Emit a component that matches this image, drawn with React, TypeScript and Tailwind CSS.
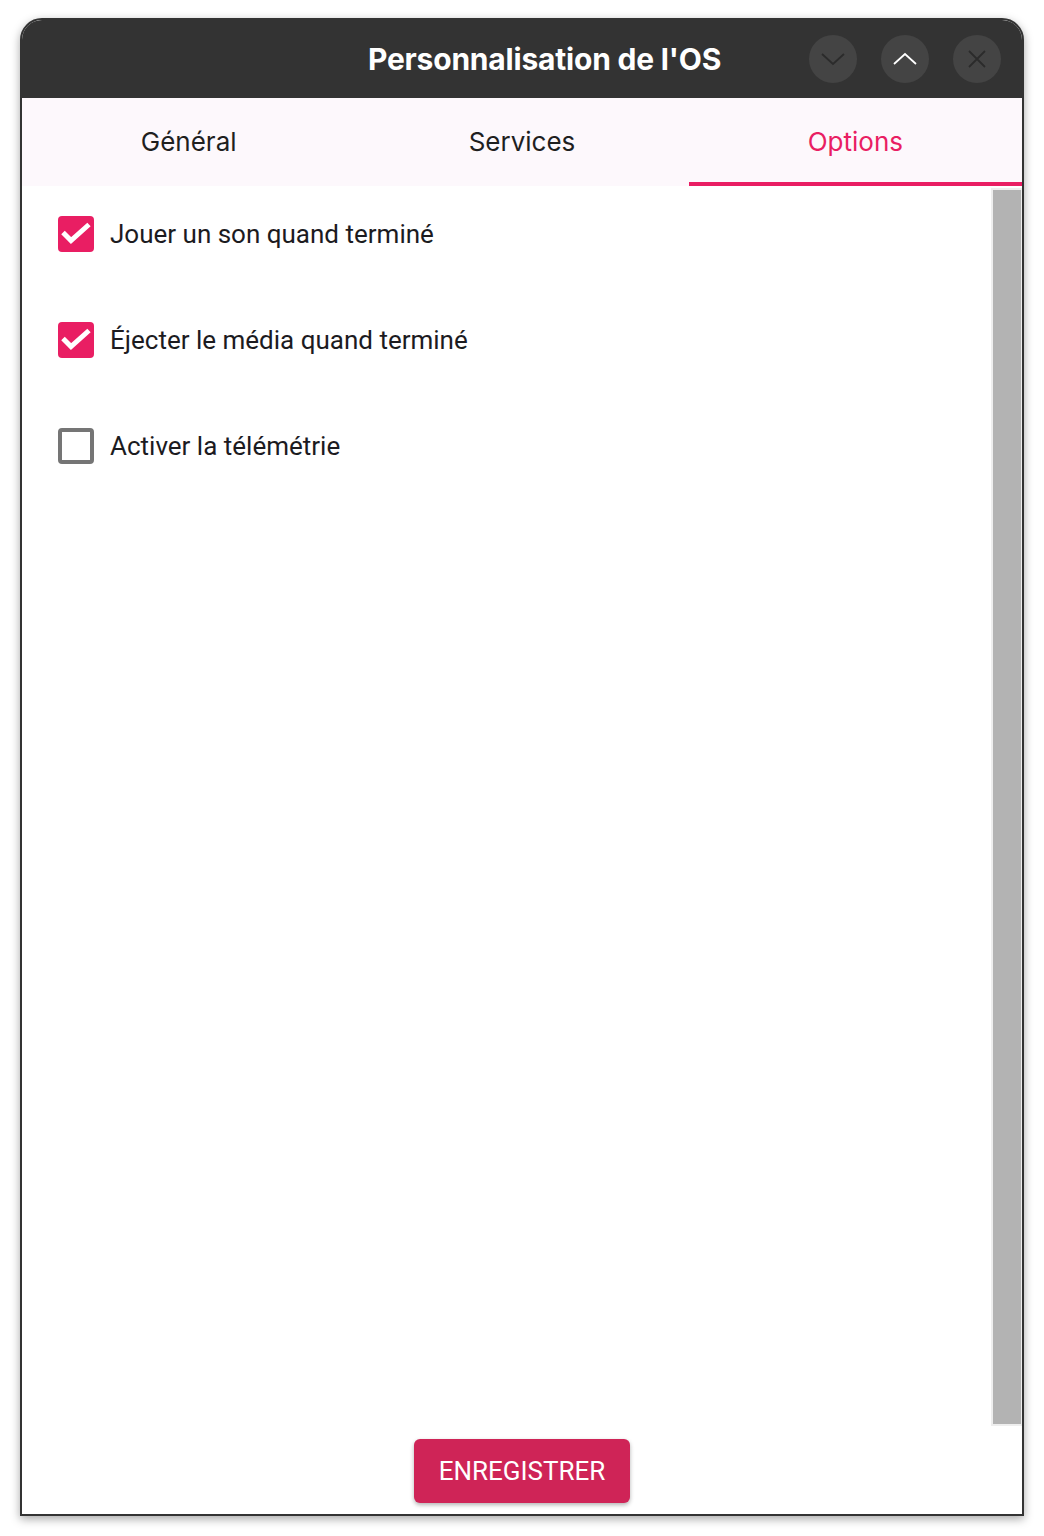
import React from "react";

const tabs = ["Général", "Services", "Options"];

const options = [
  { label: "Jouer un son quand terminé", checked: true },
  { label: "Éjecter le média quand terminé", checked: true },
  { label: "Activer la télémétrie", checked: false },
];

function CircleButton({ children }: { children: React.ReactNode }) {
  return (
    <div className="w-12 h-12 rounded-full bg-[#444444] flex items-center justify-center">
      {children}
    </div>
  );
}

function Checkbox({ checked }: { checked: boolean }) {
  if (checked) {
    return (
      <div className="w-9 h-9 rounded-[4px] bg-[#e91e63] flex items-center justify-center shrink-0">
        <svg width="36" height="36" viewBox="0 0 36 36">
          <polyline
            points="5,16.5 13,24.5 31,8.5"
            fill="none"
            stroke="#ffffff"
            strokeWidth="5"
          />
        </svg>
      </div>
    );
  }
  return <div className="w-9 h-9 rounded-[4px] border-4 border-[#757575] bg-white shrink-0" />;
}

export default function App() {
  return (
    <div className="min-h-[1536px] bg-white pt-[18px] pl-5">
      <div className="w-[1004px] h-[1498px] flex flex-col rounded-t-[22px] border-2 border-[#333333] bg-white overflow-hidden shadow-[0_3px_10px_rgba(0,0,0,0.35)]">
        {/* title bar */}
        <header className="h-[78px] bg-[#333333] flex items-center pr-[21px] shrink-0">
          <h1 className="flex-1 pl-[258px] text-center text-white text-[30px] font-bold font-['Inter',sans-serif] leading-none tracking-[-0.2px]">
            Personnalisation de l'OS
          </h1>
          <div className="flex gap-6">
            <CircleButton>
              <svg width="26" height="26" viewBox="0 0 26 26">
                <polyline points="2,8 13,18 24,8" fill="none" stroke="#2b2b2b" strokeWidth="1.8" />
              </svg>
            </CircleButton>
            <CircleButton>
              <svg width="26" height="26" viewBox="0 0 26 26">
                <polyline points="2,18 13,8 24,18" fill="none" stroke="#ffffff" strokeWidth="1.8" />
              </svg>
            </CircleButton>
            <CircleButton>
              <svg width="26" height="26" viewBox="0 0 26 26">
                <path d="M5 5 L21 21 M21 5 L5 21" fill="none" stroke="#2b2b2b" strokeWidth="1.8" />
              </svg>
            </CircleButton>
          </div>
        </header>

        {/* tabs */}
        <nav className="grid grid-cols-3 bg-[#fdf8fc] h-[88px] shrink-0 font-['Inter',sans-serif]">
          {tabs.map((t) => {
            const active = t === "Options";
            return (
              <div
                key={t}
                className={`flex items-center justify-center text-[26px] border-b-4 ${
                  active ? "text-[#e91e63] border-[#e91e63]" : "text-[#1f1f1f] border-transparent"
                }`}
              >
                <span className="pt-[2px]">{t}</span>
              </div>
            );
          })}
        </nav>

        {/* content */}
        <div className="flex-1 flex min-h-0">
          <div className="flex-1 pl-9 pt-[30px] flex flex-col gap-[70px] font-['Roboto',sans-serif]">
            {options.map((o) => (
              <label key={o.label} className="flex items-center gap-4 h-9">
                <Checkbox checked={o.checked} />
                <span className="text-[26px] text-[#1c1b1f] leading-none">{o.label}</span>
              </label>
            ))}
          </div>
          <div className="w-[31px] mt-[2px] bg-[#eeeeee] p-[2px] pr-px">
            <div className="h-full bg-[#b3b3b3]" />
          </div>
        </div>

        {/* footer */}
        <div className="flex justify-center pt-[13px] pb-[11px] shrink-0">
          <button className="w-[216px] h-16 rounded-md bg-[#cf2457] text-white text-[26px] font-['Roboto',sans-serif] shadow-[0_2px_4px_rgba(0,0,0,0.3)]">
            ENREGISTRER
          </button>
        </div>
      </div>
    </div>
  );
}
